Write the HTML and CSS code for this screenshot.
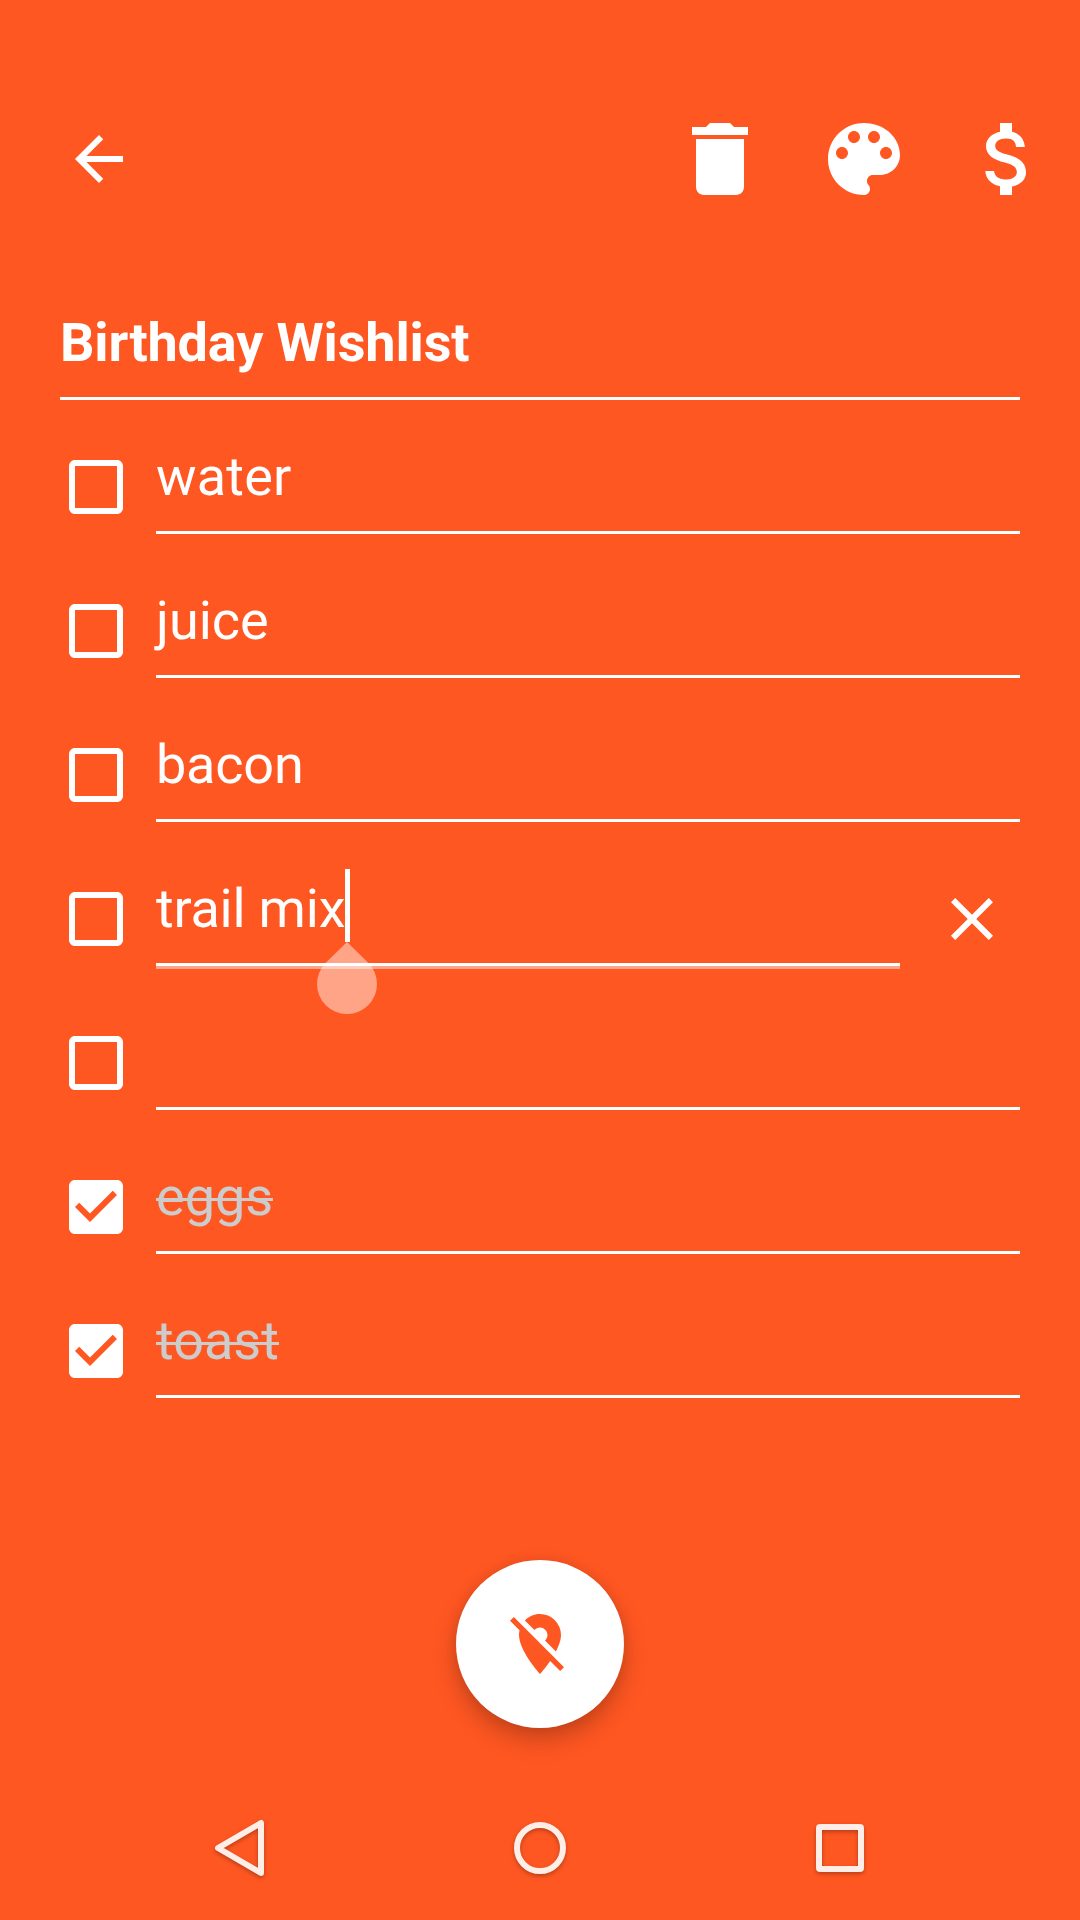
FILE: index.html
```html
<!DOCTYPE html>
<html lang="en">
<head>
<meta charset="utf-8">
<title>Birthday Wishlist</title>
<link rel="stylesheet" href="styles.css">
</head>
<body>
<svg class="defs" width="0" height="0" aria-hidden="true">
  <symbol id="box" viewBox="0 0 24 24"><path d="M19 5v14H5V5h14m0-2H5c-1.1 0-2 .9-2 2v14c0 1.1.9 2 2 2h14c1.1 0 2-.9 2-2V5c0-1.1-.9-2-2-2z"/></symbol>
  <symbol id="box-checked" viewBox="0 0 24 24"><path d="M19 3H5c-1.11 0-2 .9-2 2v14c0 1.1.89 2 2 2h14c1.11 0 2-.9 2-2V5c0-1.1-.89-2-2-2zm-9 14l-5-5 1.41-1.41L10 14.17l7.59-7.59L19 8l-9 9z"/></symbol>
</svg>

<header class="toolbar">
  <svg class="icon back" viewBox="0 0 24 24"><path d="M20 11H7.83l5.59-5.59L12 4l-8 8 8 8 1.41-1.41L7.83 13H20v-2z"/></svg>
  <div class="actions">
    <svg class="icon-large" viewBox="0 0 24 24"><path d="M6 19c0 1.1.9 2 2 2h8c1.1 0 2-.9 2-2V7H6v12zM19 4h-3.5l-1-1h-5l-1 1H5v2h14V4z"/></svg>
    <svg class="icon-large" viewBox="0 0 24 24"><path d="M12 3c-4.97 0-9 4.03-9 9s4.03 9 9 9c.83 0 1.5-.67 1.5-1.5 0-.39-.15-.74-.39-1.01-.23-.26-.38-.61-.38-.99 0-.83.67-1.5 1.5-1.5H16c2.76 0 5-2.24 5-5 0-4.42-4.03-8-9-8zm-5.500 9c-.83 0-1.500-.67-1.500-1.500S5.670 9 6.500 9 8 9.670 8 10.500 7.330 12 6.500 12zm3-4C8.670 8 8 7.330 8 6.500S8.670 5 9.500 5s1.500.67 1.500 1.500S10.330 8 9.500 8zm5 0c-.83 0-1.500-.67-1.500-1.500S13.670 5 14.500 5s1.500.67 1.500 1.500S15.330 8 14.500 8zm3 4c-.83 0-1.500-.67-1.500-1.500S16.670 9 17.500 9s1.500.67 1.500 1.500-.67 1.500-1.500 1.500z"/></svg>
    <svg class="icon-large" viewBox="0 0 24 24"><path d="M11.800 10.900c-2.270-.59-3-1.200-3-2.150 0-1.090 1.010-1.850 2.700-1.850 1.780 0 2.440.85 2.500 2.100h2.210c-.07-1.720-1.120-3.300-3.210-3.810V3h-3v2.160c-1.940.42-3.500 1.680-3.500 3.610 0 2.310 1.910 3.460 4.700 4.130 2.500.6 3 1.480 3 2.410 0 .69-.49 1.790-2.700 1.790-2.060 0-2.870-.92-2.980-2.100h-2.200c.12 2.190 1.760 3.420 3.680 3.830V21h3v-2.150c1.950-.37 3.500-1.500 3.500-3.550 0-2.840-2.430-3.810-4.700-4.400z"/></svg>
  </div>
</header>

<main class="note">
  <h1 class="title">Birthday Wishlist</h1>
  <ul class="items">
    <li class="item"><svg class="icon"><use href="#box"/></svg><div class="field"><span class="text loose">water</span></div></li>
    <li class="item"><svg class="icon"><use href="#box"/></svg><div class="field"><span class="text">juice</span></div></li>
    <li class="item"><svg class="icon"><use href="#box"/></svg><div class="field"><span class="text tight">bacon</span></div></li>
    <li class="item">
      <svg class="icon"><use href="#box"/></svg>
      <div class="field focused"><span class="text tight">trail mix<span class="caret"><svg class="handle" viewBox="0 0 60 72"><path d="M30 0L51.210 20.790A30 30 0 1 1 8.790 20.790Z"/></svg></span></span></div>
      <svg class="icon remove" viewBox="0 0 24 24"><path d="M19 6.410L17.590 5 12 10.590 6.410 5 5 6.410 10.590 12 5 17.590 6.410 19 12 13.410 17.590 19 19 17.590 13.410 12z"/></svg>
    </li>
    <li class="item"><svg class="icon"><use href="#box"/></svg><div class="field"><span class="text"></span></div></li>
    <li class="item done"><svg class="icon"><use href="#box-checked"/></svg><div class="field"><span class="text">eggs</span></div></li>
    <li class="item done"><svg class="icon"><use href="#box-checked"/></svg><div class="field"><span class="text">toast</span></div></li>
  </ul>
</main>

<div class="fab">
  <svg class="icon" viewBox="0 0 24 24"><path d="M16.370 16.100L11.750 11.470L11.640 11.360L3.270 3L2 4.270L5.180 7.450C5.060 7.950 5 8.460 5 9C5 14.250 12 22 12 22C12 22 13.670 20.150 15.370 17.650L18.730 21L20 19.730M12 6.500A2.500 2.500 0 0 1 14.500 9C14.500 9.730 14.170 10.390 13.670 10.850L17.300 14.500C18.280 12.620 19 10.680 19 9A7 7 0 0 0 12 2C10 2 8.240 2.820 6.960 4.140L10.150 7.330C10.610 6.820 11.260 6.500 12 6.500Z"/></svg>
</div>

<nav class="navbar">
  <svg viewBox="0 0 72 72"><path d="M57 11V61L14 36Z"/></svg>
  <svg viewBox="0 0 72 72"><circle cx="36" cy="36" r="23"/></svg>
  <svg viewBox="0 0 72 72"><path class="outline" d="M16 12H56a4 4 0 0 1 4 4V56a4 4 0 0 1-4 4H16a4 4 0 0 1-4-4V16a4 4 0 0 1 4-4ZM18 18V54H54V18Z"/></svg>
</nav>
</body>
</html>
```

FILE: styles.css
```css
* {
  box-sizing: border-box;
}

body {
  display: flex;
  flex-direction: column;
  align-items: stretch;
  width: 1080px;
  height: 1920px;
  margin: 0;
  overflow: hidden;
  background: #ff5722;
  color: #fff;
  font-family: Roboto, sans-serif;
  font-size: 54px;
  line-height: 64px;
}

svg {
  display: block;
  flex: none;
  fill: currentColor;
}

.defs {
  position: absolute;
}

.icon {
  width: 72px;
  height: 72px;
}

.icon-large {
  width: 96px;
  height: 96px;
}

.toolbar {
  display: flex;
  align-items: center;
  justify-content: space-between;
  height: 168px;
  margin-top: 75px;
  padding: 0 24px 0 63px;
}

.actions {
  display: flex;
  gap: 48px;
}

.note {
  flex: 1;
  padding: 68px 60px 0;
}

.title {
  height: 89px;
  margin: 0 0 15px;
  border-bottom: 3px solid #fff;
  font-size: 54px;
  font-weight: 700;
  letter-spacing: -0.15px;
}

.items {
  margin: 0;
  padding: 0;
  list-style: none;
}

.item {
  display: flex;
  align-items: center;
  height: 144px;
}

.field {
  flex: 1;
  align-self: stretch;
  height: 119px;
  margin-left: 24px;
  padding-top: 30px;
  border-bottom: 3px solid #fff;
}

.focused {
  box-shadow: 0 3px rgba(255, 255, 255, 0.46);
}

.text {
  position: relative;
  white-space: nowrap;
}

.tight {
  letter-spacing: -0.22px;
}

.loose {
  letter-spacing: 0.2px;
}

.caret {
  position: absolute;
  top: -8px;
  right: -5px;
  width: 5px;
  height: 73px;
  background: #fff;
}

.handle {
  position: absolute;
  top: 73px;
  left: -28px;
  width: 60px;
  height: 72px;
  opacity: 0.46;
}

.remove {
  margin: 0 12px 0 36px;
}

.done .text {
  color: #ccc;
}

.done .text::after {
  content: "";
  position: absolute;
  top: 33px;
  left: 0;
  right: 0;
  height: 3px;
  background: currentColor;
}

.fab {
  display: flex;
  align-items: center;
  justify-content: center;
  align-self: center;
  width: 168px;
  height: 168px;
  margin-bottom: 48px;
  border-radius: 50%;
  background: #fff;
  color: #ff5722;
  box-shadow: 0 12px 24px rgba(0, 0, 0, 0.22), 0 0 12px rgba(0, 0, 0, 0.08);
}

.navbar {
  display: flex;
  align-items: center;
  justify-content: center;
  gap: 228px;
  height: 144px;
}

.navbar svg {
  width: 72px;
  height: 72px;
  fill: none;
  stroke: #ffede7;
  stroke-width: 6;
  stroke-linejoin: round;
  filter: drop-shadow(0 2px 2px rgba(0, 0, 0, 0.28));
}

.navbar .outline {
  fill: #ffede7;
  fill-rule: evenodd;
  stroke: none;
}
```
